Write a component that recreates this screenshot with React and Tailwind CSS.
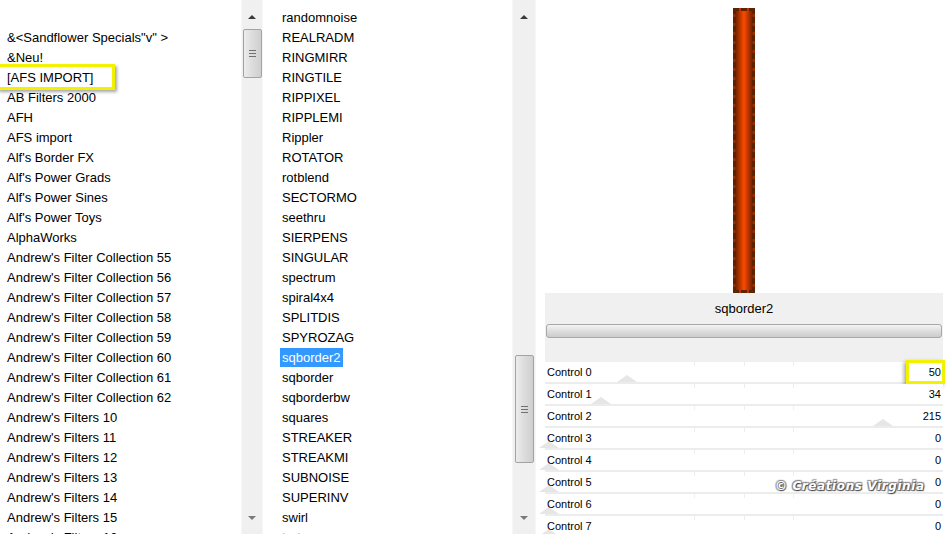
import React from 'react'

const leftItems = [
  '',
  '&<Sandflower Specials"v" >',
  '&Neu!',
  '[AFS IMPORT]',
  'AB Filters 2000',
  'AFH',
  'AFS import',
  "Alf's Border FX",
  "Alf's Power Grads",
  "Alf's Power Sines",
  "Alf's Power Toys",
  'AlphaWorks',
  "Andrew's Filter Collection 55",
  "Andrew's Filter Collection 56",
  "Andrew's Filter Collection 57",
  "Andrew's Filter Collection 58",
  "Andrew's Filter Collection 59",
  "Andrew's Filter Collection 60",
  "Andrew's Filter Collection 61",
  "Andrew's Filter Collection 62",
  "Andrew's Filters 10",
  "Andrew's Filters 11",
  "Andrew's Filters 12",
  "Andrew's Filters 13",
  "Andrew's Filters 14",
  "Andrew's Filters 15",
  "Andrew's Filters 16",
]

const middleItems = [
  'randomnoise', 'REALRADM', 'RINGMIRR', 'RINGTILE', 'RIPPIXEL', 'RIPPLEMI', 'Rippler',
  'ROTATOR', 'rotblend', 'SECTORMO', 'seethru', 'SIERPENS', 'SINGULAR', 'spectrum',
  'spiral4x4', 'SPLITDIS', 'SPYROZAG', 'sqborder2', 'sqborder', 'sqborderbw', 'squares',
  'STREAKER', 'STREAKMI', 'SUBNOISE', 'SUPERINV', 'swirl', 'tartan',
]

const controls = [
  { name: 'Control 0', value: 50, thumb: 'left-[72px]' },
  { name: 'Control 1', value: 34, thumb: 'left-[46px]' },
  { name: 'Control 2', value: 215, thumb: 'left-[328px]' },
  { name: 'Control 3', value: 0, thumb: '-left-[6px]' },
  { name: 'Control 4', value: 0, thumb: '-left-[6px]' },
  { name: 'Control 5', value: 0, thumb: '-left-[6px]' },
  { name: 'Control 6', value: 0, thumb: '-left-[6px]' },
  { name: 'Control 7', value: 0, thumb: '-left-[6px]' },
]

function Grip() {
  return (
    <div className="flex flex-col gap-[2px]">
      <span className="block w-[7px] h-px bg-[#707070]" />
      <span className="block w-[7px] h-px bg-[#707070]" />
      <span className="block w-[7px] h-px bg-[#707070]" />
    </div>
  )
}

function Scrollbar({ width, before, thumb }) {
  return (
    <div className={`${width} h-full shrink-0 flex flex-col items-center bg-[#f0f0f0] border-x border-[#f7f7f7]`}>
      <div className="h-[22px] shrink-0 w-full flex items-end justify-center pb-[3px]">
        <div className="w-0 h-0 border-x-[4px] border-x-transparent border-b-[4px] border-b-[#3a3a3a]" />
      </div>
      <div className={`${before} shrink-0`} />
      <div className={`${thumb} shrink-0 w-[19px] rounded-[2px] border border-[#a3a3a3] bg-gradient-to-r from-[#ececec] via-[#dcdcdc] to-[#cfcfcf] flex items-center justify-center`}>
        <Grip />
      </div>
      <div className="flex-1" />
      <div className="h-[20px] shrink-0 w-full flex items-start justify-center pt-[2px]">
        <div className="w-0 h-0 border-x-[4px] border-x-transparent border-t-[4px] border-t-[#7a7a7a]" />
      </div>
    </div>
  )
}

export default function App() {
  return (
    <div
      className="w-[949px] h-[534px] overflow-hidden bg-white flex text-black"
      style={{ fontFamily: '"Liberation Sans", Arial, sans-serif' }}
    >
      {/* filter families */}
      <div className="w-[241px] shrink-0 pt-[8px] text-[13px]">
        {leftItems.map((item, i) => (
          <div key={i} className="relative h-[20px] leading-[20px] pl-[7px] whitespace-nowrap">
            {item}
            {item === '[AFS IMPORT]' && (
              <div className="absolute -left-[3px] -top-[4px] w-[118px] h-[26px] border-[3px] border-[#f2f200] shadow-[2px_2px_3px_rgba(0,0,0,0.35)]" />
            )}
          </div>
        ))}
      </div>
      <Scrollbar width="w-[22px]" before="h-[7px]" thumb="h-[49px]" />

      {/* filters */}
      <div className="w-[249px] shrink-0 pt-[8px] pl-[17px] text-[13px]">
        {middleItems.map((item) => (
          <div key={item} className="h-[20px] leading-[20px] whitespace-nowrap">
            <span className={item === 'sqborder2' ? 'bg-[#3399ff] text-white px-[2px] py-[2px]' : 'px-[2px]'}>{item}</span>
          </div>
        ))}
      </div>
      <Scrollbar width="w-[24px]" before="h-[333px]" thumb="h-[108px]" />

      {/* preview + controls */}
      <div className="flex-1 relative pl-[9px] pr-[6px] flex flex-col">
        <div className="h-[293px] shrink-0 flex justify-center pt-[8px]">
          <div className="w-[22px] h-[285px] border-[3px] border-dashed border-[#5c2204] bg-gradient-to-r from-[#7a2400] via-[#ff4a00] to-[#7a2400]" />
        </div>
        <div className="h-[69px] shrink-0 bg-[#f0f0f0] flex flex-col items-center">
          <div className="h-[31px] leading-[31px] text-[13px]">sqborder2</div>
          <div className="w-[calc(100%-2px)] h-[14px] rounded-[3px] border border-[#a8a8a8] bg-gradient-to-b from-[#f4f4f4] via-[#dedede] to-[#cccccc]" />
        </div>
        <div className="flex flex-col text-[11px]">
          {controls.map((c, i) => (
            <div key={c.name} className="relative h-[22px] shrink-0 border-b-2 border-[#ececec] bg-white">
              <div className="absolute inset-0 flex justify-between">
                <span className="w-[100px]" />
                <span className="w-px h-[4px] bg-[#eeeeee]" />
                <span className="w-px h-[4px] bg-[#eeeeee]" />
                <span className="w-px h-[4px] bg-[#eeeeee]" />
                <span className="w-[100px]" />
              </div>
              <div className={`absolute bottom-0 ${c.thumb} w-0 h-0 border-x-[10px] border-x-transparent border-b-[7px] border-b-[#e6e6e6]`} />
              <div className="relative flex justify-between items-center h-[20px] px-[2px]">
                <span>{c.name}</span>
                <span>{c.value}</span>
              </div>
              {i === 0 && (
                <div className="absolute -right-[2px] -top-[2px] w-[39px] h-[24px] border-[3px] border-[#f2f200] shadow-[-2px_2px_4px_rgba(0,0,0,0.35)]" />
              )}
            </div>
          ))}
        </div>
        <div
          className="absolute left-[239px] top-[477px] text-[12px] font-bold italic text-white tracking-[0.6px] [text-shadow:1px_1px_1px_#444,-1px_-1px_1px_#888,1px_-1px_1px_#888,-1px_1px_1px_#888]"
          style={{ fontFamily: '"DejaVu Sans", sans-serif' }}
        >
          © Créations Virginia
        </div>
      </div>
    </div>
  )
}
